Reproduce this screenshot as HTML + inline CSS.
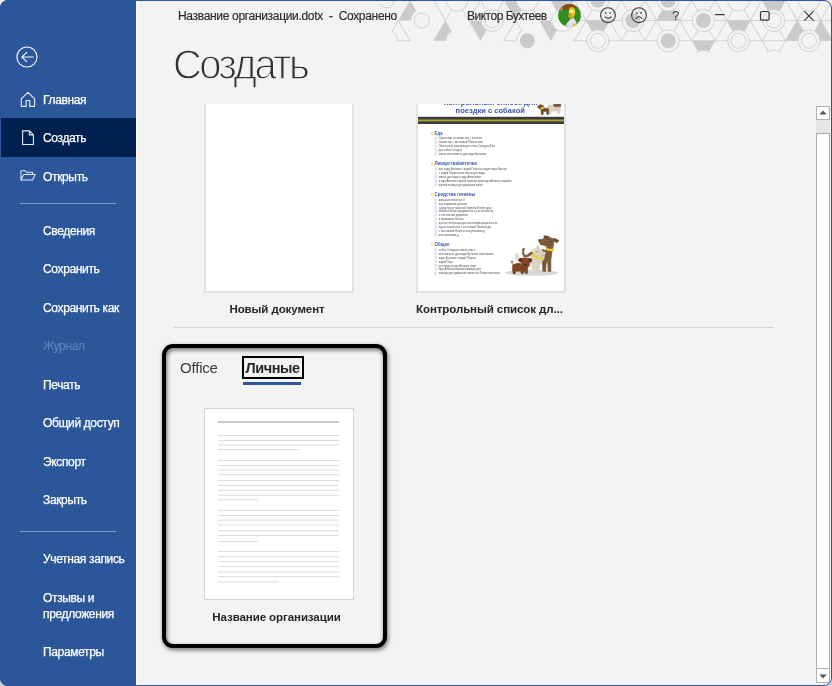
<!DOCTYPE html>
<html lang="ru">
<head>
<meta charset="utf-8">
<title>Создать</title>
<style>
*{box-sizing:border-box;margin:0;padding:0}
html,body{width:832px;height:686px;overflow:hidden;background:linear-gradient(#efefef 0,#efefef 50%,#cdcdcd 50%,#cdcdcd 100%)}
body{font-family:"Liberation Sans",sans-serif;position:relative}
#win{position:absolute;left:0;top:0;width:832px;height:686px;background:#f3f3f3;border-radius:8px;overflow:hidden;will-change:transform;-webkit-font-smoothing:antialiased}
#frame{position:absolute;left:0;top:0;width:832px;height:686px;border-radius:8px;border:1px solid #2b579a;pointer-events:none;z-index:50}
.abs{position:absolute}
/* sidebar */
#side{position:absolute;left:0;top:0;width:136px;height:686px;background:#2b579a}
#sideedge{position:absolute;left:136px;top:0;width:1px;height:686px;background:#fbfbfb}
#sel{position:absolute;left:1px;top:118px;width:135px;height:39px;background:#002050}
.mi{position:absolute;left:43px;color:#fff;font-size:12px;line-height:14px;white-space:nowrap;letter-spacing:-0.35px;-webkit-text-stroke:0.25px #fff}
.mi.dis{color:#5f82bb;-webkit-text-stroke:0.2px #5f82bb}
.sep{position:absolute;left:20px;width:96px;height:1px;background:#7b9bcb}
.ico{position:absolute;overflow:visible}
/* titlebar */
.hex{position:absolute;left:380px;top:0}
.tb{position:absolute;top:9px;font-size:12px;line-height:14px;color:#2b2b2b;-webkit-text-stroke:0.15px #2b2b2b;white-space:nowrap;letter-spacing:-0.32px}
h1{position:absolute;left:172.5px;top:39px;font-size:43.2px;line-height:50px;font-weight:400;color:#303030;letter-spacing:-2.7px;white-space:nowrap;-webkit-text-stroke:1.3px #f3f3f3;transform:scaleX(0.925);transform-origin:0 0}
.thumb{position:absolute;background:#fff;border:1px solid #d2d2d2;overflow:hidden}
.t1{border:2px solid #e2e2e2;border-top:none}
.cap{position:absolute;font-size:11.5px;line-height:14px;font-weight:700;color:#262626;white-space:nowrap;text-align:center;letter-spacing:-0.08px}
#hr{position:absolute;left:174px;top:327px;width:600px;height:1px;background:#d4d4d4}
#hl{position:absolute;left:162px;top:343.5px;width:224.5px;height:304px;border:4px solid #000;border-radius:11px;filter:drop-shadow(1px 2.5px 2.2px rgba(0,0,0,.6))}
#tabOffice{position:absolute;left:180px;top:359px;font-size:15px;line-height:17px;color:#3b3b3b;letter-spacing:-0.2px}
#tabPers{position:absolute;left:241.5px;top:356px;width:62px;height:23px;border:2px solid #000}
#tabPers span{position:absolute;left:1px;top:2px;width:56px;text-align:center;font-size:14.5px;line-height:17px;font-weight:700;color:#262626;letter-spacing:-0.45px}
#tabLine{position:absolute;left:243px;top:382px;width:58px;height:3px;background:#2b579a}
/* scrollbar */
.sbtn{position:absolute;left:816px;width:14px;height:14px;background:#fff;border:1px solid #b0b0b0}
#strack{position:absolute;left:816px;top:120px;width:14px;height:13px;background:#e6e6e6}
#sthumb{position:absolute;left:816px;top:133px;width:14px;height:536px;background:#fff;border:1px solid #ababab}
</style>
</head>
<body>
<div id="win">
  <!-- title bar pattern -->
  <svg class="hex" width="452" height="53" viewBox="380 0 452 53">
<clipPath id="rc"><rect x="573" y="0" width="300" height="41.4"/></clipPath><g stroke="#d1d1d1" stroke-width="1" fill="none" clip-path="url(#rc)"><line x1="380" y1="0.2" x2="832" y2="0.2"/><line x1="380" y1="20.5" x2="832" y2="20.5"/><line x1="380" y1="40.8" x2="832" y2="40.8"/><line x1="380" y1="61.1" x2="832" y2="61.1"/><line x1="-24.3" y1="-20.3" x2="28.6" y2="71.2"/><line x1="22.9" y1="-20.3" x2="-30.0" y2="71.2"/><line x1="-0.8" y1="-20.3" x2="52.1" y2="71.2"/><line x1="46.3" y1="-20.3" x2="-6.5" y2="71.2"/><line x1="22.7" y1="-20.3" x2="75.5" y2="71.2"/><line x1="69.8" y1="-20.3" x2="16.9" y2="71.2"/><line x1="46.2" y1="-20.3" x2="99.0" y2="71.2"/><line x1="93.3" y1="-20.3" x2="40.4" y2="71.2"/><line x1="69.6" y1="-20.3" x2="122.5" y2="71.2"/><line x1="116.7" y1="-20.3" x2="63.9" y2="71.2"/><line x1="93.1" y1="-20.3" x2="146.0" y2="71.2"/><line x1="140.2" y1="-20.3" x2="87.3" y2="71.2"/><line x1="116.6" y1="-20.3" x2="169.4" y2="71.2"/><line x1="163.7" y1="-20.3" x2="110.8" y2="71.2"/><line x1="140.0" y1="-20.3" x2="192.9" y2="71.2"/><line x1="187.1" y1="-20.3" x2="134.3" y2="71.2"/><line x1="163.5" y1="-20.3" x2="216.4" y2="71.2"/><line x1="210.6" y1="-20.3" x2="157.8" y2="71.2"/><line x1="187.0" y1="-20.3" x2="239.8" y2="71.2"/><line x1="234.1" y1="-20.3" x2="181.2" y2="71.2"/><line x1="210.4" y1="-20.3" x2="263.3" y2="71.2"/><line x1="257.6" y1="-20.3" x2="204.7" y2="71.2"/><line x1="233.9" y1="-20.3" x2="286.8" y2="71.2"/><line x1="281.0" y1="-20.3" x2="228.2" y2="71.2"/><line x1="257.4" y1="-20.3" x2="310.2" y2="71.2"/><line x1="304.5" y1="-20.3" x2="251.6" y2="71.2"/><line x1="280.9" y1="-20.3" x2="333.7" y2="71.2"/><line x1="328.0" y1="-20.3" x2="275.1" y2="71.2"/><line x1="304.3" y1="-20.3" x2="357.2" y2="71.2"/><line x1="351.4" y1="-20.3" x2="298.6" y2="71.2"/><line x1="327.8" y1="-20.3" x2="380.7" y2="71.2"/><line x1="374.9" y1="-20.3" x2="322.0" y2="71.2"/><line x1="351.3" y1="-20.3" x2="404.1" y2="71.2"/><line x1="398.4" y1="-20.3" x2="345.5" y2="71.2"/><line x1="374.7" y1="-20.3" x2="427.6" y2="71.2"/><line x1="421.8" y1="-20.3" x2="369.0" y2="71.2"/><line x1="398.2" y1="-20.3" x2="451.1" y2="71.2"/><line x1="445.3" y1="-20.3" x2="392.5" y2="71.2"/><line x1="421.7" y1="-20.3" x2="474.5" y2="71.2"/><line x1="468.8" y1="-20.3" x2="415.9" y2="71.2"/><line x1="445.1" y1="-20.3" x2="498.0" y2="71.2"/><line x1="492.3" y1="-20.3" x2="439.4" y2="71.2"/><line x1="468.6" y1="-20.3" x2="521.5" y2="71.2"/><line x1="515.7" y1="-20.3" x2="462.9" y2="71.2"/><line x1="492.1" y1="-20.3" x2="544.9" y2="71.2"/><line x1="539.2" y1="-20.3" x2="486.3" y2="71.2"/><line x1="515.6" y1="-20.3" x2="568.4" y2="71.2"/><line x1="562.7" y1="-20.3" x2="509.8" y2="71.2"/><line x1="539.0" y1="-20.3" x2="591.9" y2="71.2"/><line x1="586.1" y1="-20.3" x2="533.3" y2="71.2"/><line x1="562.5" y1="-20.3" x2="615.4" y2="71.2"/><line x1="609.6" y1="-20.3" x2="556.7" y2="71.2"/><line x1="586.0" y1="-20.3" x2="638.8" y2="71.2"/><line x1="633.1" y1="-20.3" x2="580.2" y2="71.2"/><line x1="609.4" y1="-20.3" x2="662.3" y2="71.2"/><line x1="656.5" y1="-20.3" x2="603.7" y2="71.2"/><line x1="632.9" y1="-20.3" x2="685.8" y2="71.2"/><line x1="680.0" y1="-20.3" x2="627.2" y2="71.2"/><line x1="656.4" y1="-20.3" x2="709.2" y2="71.2"/><line x1="703.5" y1="-20.3" x2="650.6" y2="71.2"/><line x1="679.8" y1="-20.3" x2="732.7" y2="71.2"/><line x1="727.0" y1="-20.3" x2="674.1" y2="71.2"/><line x1="703.3" y1="-20.3" x2="756.2" y2="71.2"/><line x1="750.4" y1="-20.3" x2="697.6" y2="71.2"/><line x1="726.8" y1="-20.3" x2="779.6" y2="71.2"/><line x1="773.9" y1="-20.3" x2="721.0" y2="71.2"/><line x1="750.3" y1="-20.3" x2="803.1" y2="71.2"/><line x1="797.4" y1="-20.3" x2="744.5" y2="71.2"/><line x1="773.7" y1="-20.3" x2="826.6" y2="71.2"/><line x1="820.8" y1="-20.3" x2="768.0" y2="71.2"/><line x1="797.2" y1="-20.3" x2="850.1" y2="71.2"/><line x1="844.3" y1="-20.3" x2="791.4" y2="71.2"/><line x1="820.7" y1="-20.3" x2="873.5" y2="71.2"/><line x1="867.8" y1="-20.3" x2="814.9" y2="71.2"/><line x1="844.1" y1="-20.3" x2="897.0" y2="71.2"/><line x1="891.2" y1="-20.3" x2="838.4" y2="71.2"/><line x1="867.6" y1="-20.3" x2="920.5" y2="71.2"/><line x1="914.7" y1="-20.3" x2="861.9" y2="71.2"/><line x1="891.1" y1="-20.3" x2="943.9" y2="71.2"/><line x1="938.2" y1="-20.3" x2="885.3" y2="71.2"/><line x1="914.5" y1="-20.3" x2="967.4" y2="71.2"/><line x1="961.7" y1="-20.3" x2="908.8" y2="71.2"/><line x1="938.0" y1="-20.3" x2="990.9" y2="71.2"/><line x1="985.1" y1="-20.3" x2="932.3" y2="71.2"/></g><g stroke="#d1d1d1" stroke-width="1" fill="none"><line x1="398.3" y1="20.5" x2="386.6" y2="40.8"/><line x1="386.6" y1="40.8" x2="410.1" y2="40.8"/><line x1="410.1" y1="40.8" x2="398.3" y2="20.5"/><line x1="433.5" y1="0.2" x2="445.3" y2="20.5"/><line x1="445.3" y1="20.5" x2="457.0" y2="0.2"/><line x1="457.0" y1="0.2" x2="468.7" y2="20.5"/><line x1="468.7" y1="20.5" x2="480.5" y2="0.2"/><line x1="480.5" y1="0.2" x2="492.2" y2="20.5"/><line x1="492.2" y1="20.5" x2="503.9" y2="0.2"/><line x1="527.4" y1="0.2" x2="539.1" y2="20.5"/><line x1="515.7" y1="20.5" x2="503.9" y2="40.8"/><line x1="503.9" y1="40.8" x2="527.4" y2="40.8"/><line x1="527.4" y1="40.8" x2="515.7" y2="20.5"/><line x1="562.6" y1="20.5" x2="550.9" y2="0.2"/><line x1="762.1" y1="40.8" x2="773.8" y2="61.1"/><line x1="773.8" y1="61.1" x2="785.5" y2="40.8"/><line x1="562.6" y1="20.5" x2="586.1" y2="20.5"/></g><polygon points="773.8,20.5 762.1,0.2 785.5,0.2" fill="#cacaca"/><polygon points="738.6,40.8 726.9,20.5 750.3,20.5" fill="#cacaca"/><polygon points="703.4,61.1 691.7,40.8 715.1,40.8" fill="#cacaca"/><polygon points="809.0,40.8 785.5,40.8 797.3,20.5" fill="#cacaca"/><polygon points="809.0,40.8 832.5,40.8 820.7,20.5" fill="#cacaca"/><polygon points="562.6,20.5 539.1,20.5 550.9,40.8" fill="#cacaca"/><polygon points="597.8,40.8 586.1,20.5 609.5,20.5" fill="#cacaca"/><polygon points="562.6,20.5 550.9,0.2 574.3,0.2" fill="#cacaca"/><polygon points="668.2,0.2 656.5,20.5 679.9,20.5" fill="#cacaca"/><polygon points="421.8,20.5 398.3,20.5 410.1,0.2" fill="#cacaca"/><polygon points="457.0,40.8 433.5,40.8 445.3,20.5" fill="#cacaca"/><polygon points="492.2,20.5 468.7,20.5 480.5,40.8" fill="#cacaca"/><polygon points="527.4,0.2 503.9,0.2 515.7,20.5" fill="#cacaca"/><circle cx="351.4" cy="20.5" r="11" fill="#f3f3f3" stroke="#d1d1d1"/><circle cx="351.4" cy="20.5" r="7.5" fill="#f3f3f3" stroke="#d1d1d1"/><circle cx="386.6" cy="0.2" r="11" fill="#f3f3f3"/><circle cx="386.6" cy="0.2" r="7.5" fill="#f3f3f3" stroke="#d1d1d1"/><circle cx="386.6" cy="40.8" r="11" fill="#f3f3f3"/><circle cx="421.8" cy="20.5" r="11" fill="#f3f3f3"/><circle cx="421.8" cy="20.5" r="7.5" fill="#f3f3f3" stroke="#d1d1d1"/><circle cx="457.0" cy="0.2" r="11" fill="#f3f3f3" stroke="#d1d1d1"/><circle cx="457.0" cy="40.8" r="11" fill="#f3f3f3"/><circle cx="492.2" cy="20.5" r="11" fill="#f3f3f3" stroke="#d1d1d1"/><circle cx="492.2" cy="20.5" r="7.5" fill="#f3f3f3" stroke="#d1d1d1"/><circle cx="527.4" cy="0.2" r="11" fill="#f3f3f3" stroke="#d1d1d1"/><circle cx="527.4" cy="40.8" r="11" fill="#f3f3f3"/><circle cx="527.4" cy="40.8" r="7.5" fill="#cacaca"/><circle cx="562.6" cy="20.5" r="11" fill="#f3f3f3" stroke="#d1d1d1"/><circle cx="597.8" cy="0.2" r="11" fill="#f3f3f3" stroke="#d1d1d1"/><circle cx="597.8" cy="0.2" r="7.5" fill="#cacaca"/><circle cx="597.8" cy="40.8" r="11" fill="#f3f3f3" stroke="#d1d1d1"/><circle cx="597.8" cy="40.8" r="7.5" fill="#f3f3f3" stroke="#d1d1d1"/><circle cx="633.0" cy="20.5" r="11" fill="#f3f3f3" stroke="#d1d1d1"/><circle cx="633.0" cy="20.5" r="7.5" fill="#cacaca"/><circle cx="668.2" cy="0.2" r="11" fill="#f3f3f3" stroke="#d1d1d1"/><circle cx="668.2" cy="0.2" r="7.5" fill="#cacaca"/><circle cx="668.2" cy="40.8" r="11" fill="#f3f3f3" stroke="#d1d1d1"/><circle cx="668.2" cy="40.8" r="7.5" fill="#cacaca"/><circle cx="703.4" cy="20.5" r="11" fill="#f3f3f3" stroke="#d1d1d1"/><circle cx="703.4" cy="20.5" r="7.5" fill="#cacaca"/><circle cx="703.4" cy="61.1" r="11" fill="#f3f3f3" stroke="#d1d1d1"/><circle cx="703.4" cy="61.1" r="7.5" fill="#f3f3f3" stroke="#d1d1d1"/><circle cx="738.6" cy="0.2" r="11" fill="#f3f3f3" stroke="#d1d1d1"/><circle cx="738.6" cy="40.8" r="11" fill="#f3f3f3" stroke="#d1d1d1"/><circle cx="738.6" cy="40.8" r="7.5" fill="#f3f3f3" stroke="#d1d1d1"/><circle cx="773.8" cy="20.5" r="11" fill="#f3f3f3" stroke="#d1d1d1"/><circle cx="773.8" cy="20.5" r="7.5" fill="#f3f3f3" stroke="#d1d1d1"/><circle cx="773.8" cy="61.1" r="11" fill="#f3f3f3" stroke="#d1d1d1"/><circle cx="773.8" cy="61.1" r="7.5" fill="#f3f3f3" stroke="#d1d1d1"/><circle cx="809.0" cy="0.2" r="11" fill="#f3f3f3" stroke="#d1d1d1"/><circle cx="809.0" cy="40.8" r="11" fill="#f3f3f3" stroke="#d1d1d1"/><circle cx="809.0" cy="40.8" r="7.5" fill="#f3f3f3" stroke="#d1d1d1"/><circle cx="844.2" cy="20.5" r="11" fill="#f3f3f3" stroke="#d1d1d1"/><circle cx="844.2" cy="20.5" r="7.5" fill="#f3f3f3" stroke="#d1d1d1"/><path d="M392.1 31.3A11 11 0 0 1 397.6 40.8" fill="none" stroke="#d1d1d1"/><path d="M516.4 40.8A11 11 0 0 1 521.9 31.3" fill="none" stroke="#d1d1d1"/><path d="M446.0 40.8A11 11 0 0 1 451.5 31.3" fill="none" stroke="#d1d1d1"/><path d="M410.8 20.5A11 11 0 0 1 416.3 11.0" fill="none" stroke="#d1d1d1"/>
</svg>

  <!-- sidebar -->
  <div id="side"></div>
  <div id="sideedge"></div>
  <div id="sel"></div>

  <svg class="ico" style="left:16.450px;top:46.350px" width="22" height="22" viewBox="0 0 22 22" fill="none" stroke="#f4f6fa" stroke-width="1.150" stroke-linecap="round" stroke-linejoin="round">
    <circle cx="11" cy="11" r="10"/>
    <path d="M17.300 11H6M10.700 6.400L5.900 11l4.800 4.600"/>
  </svg>

  <svg class="ico" style="left:19px;top:91px" width="18" height="17" viewBox="0 0 18 17" fill="none" stroke="#e6ecf5" stroke-width="1.1" stroke-linejoin="round">
    <path d="M1.700 8.400L8.900 1.300l7.300 7.100M2.300 7.900v7.500h4.800V9.500h3.600v5.900h4.900V7.900"/>
  </svg>
  <svg class="ico" style="left:21px;top:130px" width="14" height="16" viewBox="0 0 14 16" fill="none" stroke="#e6ecf5" stroke-width="1.1" stroke-linejoin="round">
    <path d="M1.600 0.900h6.800l4 4v9.600H1.600zM8.400 0.900v4h4"/>
  </svg>
  <svg class="ico" style="left:20px;top:170.200px" width="16.500" height="11" viewBox="0 0 18 12" fill="none" stroke="#e6ecf5" stroke-width="1.1" stroke-linejoin="round">
    <path d="M1 11V0.8h4.6l1.5 1.7h6.6v2.3M1 11l3-6.2h12.6L13.7 11z"/>
  </svg>

  <div class="mi" style="top:93px">Главная</div>
  <div class="mi" style="top:131px">Создать</div>
  <div class="mi" style="top:170px">Открыть</div>
  <div class="sep" style="top:203px"></div>
  <div class="mi" style="top:224px">Сведения</div>
  <div class="mi" style="top:262px">Сохранить</div>
  <div class="mi" style="top:301px">Сохранить как</div>
  <div class="mi dis" style="top:339px">Журнал</div>
  <div class="mi" style="top:378px">Печать</div>
  <div class="mi" style="top:416px">Общий доступ</div>
  <div class="mi" style="top:455px">Экспорт</div>
  <div class="mi" style="top:493px">Закрыть</div>
  <div class="sep" style="top:531px"></div>
  <div class="mi" style="top:552px">Учетная запись</div>
  <div class="mi" style="top:590px;line-height:16px">Отзывы и<br>предложения</div>
  <div class="mi" style="top:645px">Параметры</div>

  <!-- title bar text -->
  <div class="tb" id="t1" style="left:178px">Название организации.dotx&nbsp; -&nbsp; Сохранено</div>
  <div class="tb" id="t2" style="left:467px;letter-spacing:-0.5px">Виктор Бухтеев</div>

  <!-- avatar -->
  <svg class="ico" style="left:557.9px;top:3.600px" width="23" height="23" viewBox="0 0 23 23">
    <defs><clipPath id="av"><circle cx="11.500" cy="11.500" r="11.400"/></clipPath></defs>
    <g clip-path="url(#av)">
      <rect width="23" height="23" fill="#2f8e1f"/>
      <path d="M0 0h23v4.600l-2.500-0.800-3 0.600-2-0.900-4 0.600-2 1.600-3 0.300-2.500-0.600-2 0.900-2 1.200z" fill="#8a4a1e"/>
      <path d="M2 6.500l1.500-3 1.200 0.300-1 2.600z" fill="#d9a066"/>
      <ellipse cx="14" cy="8.300" rx="3.200" ry="5.400" fill="#f3c414"/>
      <path d="M10.600 9.500c0.500-1 1.500-1.300 2.600-1l0.600 5.500c-1.300 0.800-2.800 0.200-3.300-1-0.300-1.100-0.300-2.400 0.100-3.500z" fill="#d4a017"/>
      <path d="M11.500 13.300c0.800 0.900 2.400 1.200 3.800 0.300l0.300 2.200-3.200 0.700z" fill="#b8860b"/>
      <path d="M8 22.800l0.800-3.300 3.200-4 3.600-1.700 1.800 2.700 1.500 2.800-3.300 1.400-1 2.300z" fill="#e4e2ec"/>
      <circle cx="12.600" cy="7.500" r="1.500" fill="#fdfdfd"/><circle cx="12.900" cy="7.700" r="0.350" fill="#333"/>
      <circle cx="15.300" cy="7.300" r="1.200" fill="#f8e9a8"/>
      <ellipse cx="16.600" cy="20.800" rx="1.800" ry="1.100" fill="#f3c414"/>
      <ellipse cx="7.400" cy="21.500" rx="1" ry="0.700" fill="#e8b820"/>
    </g>
  </svg>

  <!-- smile / frown / help / window buttons -->
  <svg class="ico" style="left:599px;top:6px" width="18" height="18" viewBox="0 0 18 18" fill="none" stroke="#3a3a3a" stroke-width="1.100" stroke-linecap="round">
    <circle cx="9" cy="9.200" r="7.400"/><path d="M6 10.900c1.600 1.800 4.400 1.800 6 0"/><circle cx="6.900" cy="7" r="0.850" fill="#3a3a3a" stroke="none"/><circle cx="11.100" cy="7" r="0.850" fill="#3a3a3a" stroke="none"/>
  </svg>
  <svg class="ico" style="left:630px;top:6px" width="18" height="18" viewBox="0 0 18 18" fill="none" stroke="#3a3a3a" stroke-width="1.100" stroke-linecap="round">
    <circle cx="9" cy="9.200" r="7.400"/><path d="M6 12.500c1.500-2.300 4.500-2.300 6 0"/><circle cx="6.900" cy="6.900" r="0.850" fill="#3a3a3a" stroke="none"/><circle cx="11.100" cy="6.900" r="0.850" fill="#3a3a3a" stroke="none"/>
  </svg>
  <div class="abs" style="left:672px;top:8px;font-size:13.5px;line-height:16px;color:#3a3a3a">?</div>
  <svg class="ico" style="left:714px;top:10px" width="12" height="10" viewBox="0 0 12 10" stroke="#333" stroke-width="1.200"><path d="M1 4.600h9.600"/></svg>
  <svg class="ico" style="left:759px;top:10px" width="12" height="12" viewBox="0 0 12 12" fill="none" stroke="#333" stroke-width="1.200"><rect x="1.5" y="1.500" width="8.600" height="8.600" rx="1.600"/></svg>
  <svg class="ico" style="left:803px;top:10px" width="12" height="12" viewBox="0 0 12 12" fill="none" stroke="#333" stroke-width="1.100"><path d="M1.200 1.200l9.400 9.400M10.600 1.200L1.200 10.600"/></svg>

  <h1>Создать</h1>

  <!-- thumbnails row 1 -->
  <div class="thumb t1" style="left:204px;top:104px;width:150px;height:189px"></div>
  <div class="cap" style="left:202px;top:302px;width:150px">Новый документ</div>

  <div class="thumb t1" id="dog" style="left:416px;top:104px;width:150px;height:189px"><svg class="abs" style="left:-2px;top:0" width="150" height="189" viewBox="416 104 150 189" font-family="Liberation Sans, sans-serif"><text x="443.7" y="104.9" font-size="6.3" fill="#3a58a6" font-weight="700" text-anchor="start" textLength="94.0" lengthAdjust="spacingAndGlyphs">Контрольный список для</text><text x="455.6" y="113.2" font-size="6.3" fill="#3a58a6" font-weight="700" text-anchor="start" textLength="69.3" lengthAdjust="spacingAndGlyphs">поездки с собакой</text><rect x="416" y="116.8" width="150" height="7.2" fill="#3b3b3b"/><rect x="416" y="119.5" width="150" height="1.9" fill="#a9a42c"/><polygon points="547.11,106.12 549.53,104.51 553.55,105.15 560.80,104.83 560.32,108.05 559.99,113.85 557.74,113.85 557.42,111.27 551.30,111.27 550.98,114.17 548.72,114.17 548.40,109.66 547.11,108.05" fill="#dad0c1" stroke="#dad0c1" stroke-width="0.4" stroke-linejoin="round"/><polygon points="553.23,104.19 560.80,103.86 560.80,106.44 555.97,107.09 553.55,105.80" fill="#7a5534" stroke="#7a5534" stroke-width="0.4" stroke-linejoin="round"/><polygon points="537.77,106.12 540.67,104.51 543.57,105.64 544.21,108.05 548.72,108.86 548.72,114.49 546.79,114.49 546.47,111.59 543.57,111.59 543.25,114.81 541.31,114.81 540.99,109.98 539.06,108.37 537.77,107.73" fill="#6e4828" stroke="#6e4828" stroke-width="0.4" stroke-linejoin="round"/><polygon points="540.67,107.73 543.57,106.76 543.89,108.37 541.31,109.66" fill="#e6d020" stroke="#e6d020" stroke-width="0.4" stroke-linejoin="round"/><circle cx="432" cy="133.5" r="1.15" fill="#f2dc3c"/><text x="434.6" y="135.1" font-size="4.7" fill="#3a58a6" font-weight="700" text-anchor="start" textLength="8.0" lengthAdjust="spacingAndGlyphs">Еда</text><rect x="434.700" y="137.3" width="2.300" height="2.300" fill="#e3e8f3" stroke="#c9d2e6" stroke-width="0.3"/><text x="438.8" y="139.4" font-size="2.7" fill="#4c4c4c" font-weight="400" text-anchor="start" textLength="43.2" lengthAdjust="spacingAndGlyphs">Сухая еда и лакомства с застежк</text><rect x="434.700" y="141.3" width="2.300" height="2.300" fill="#e3e8f3" stroke="#c9d2e6" stroke-width="0.3"/><text x="438.8" y="143.4" font-size="2.7" fill="#4c4c4c" font-weight="400" text-anchor="start" textLength="43.7" lengthAdjust="spacingAndGlyphs">лакомства с застежкой Пакеты или</text><rect x="434.700" y="145.1" width="2.300" height="2.300" fill="#e3e8f3" stroke="#c9d2e6" stroke-width="0.3"/><text x="438.8" y="147.2" font-size="2.7" fill="#4c4c4c" font-weight="400" text-anchor="start" textLength="56.2" lengthAdjust="spacingAndGlyphs">Пакеты или упаковки для собак СкладнаяПак</text><rect x="434.700" y="149.0" width="2.300" height="2.300" fill="#e3e8f3" stroke="#c9d2e6" stroke-width="0.3"/><text x="438.8" y="151.1" font-size="2.7" fill="#4c4c4c" font-weight="400" text-anchor="start" textLength="23.2" lengthAdjust="spacingAndGlyphs">для собак Складна</text><rect x="434.700" y="152.8" width="2.300" height="2.300" fill="#e3e8f3" stroke="#c9d2e6" stroke-width="0.3"/><text x="438.8" y="154.9" font-size="2.7" fill="#4c4c4c" font-weight="400" text-anchor="start" textLength="47.2" lengthAdjust="spacingAndGlyphs">миска или емкость для воды Бутылки</text><circle cx="432" cy="163.8" r="1.15" fill="#f2dc3c"/><text x="434.6" y="165.4" font-size="4.7" fill="#3a58a6" font-weight="700" text-anchor="start" textLength="42.1" lengthAdjust="spacingAndGlyphs">Лекарства/аптечка</text><rect x="434.700" y="168.0" width="2.300" height="2.300" fill="#e3e8f3" stroke="#c9d2e6" stroke-width="0.3"/><text x="438.8" y="170.1" font-size="2.7" fill="#4c4c4c" font-weight="400" text-anchor="start" textLength="68.2" lengthAdjust="spacingAndGlyphs">для воды Бутылки с водой Переноснаядля воды Бутылк</text><rect x="434.700" y="172.1" width="2.300" height="2.300" fill="#e3e8f3" stroke="#c9d2e6" stroke-width="0.3"/><text x="438.8" y="174.2" font-size="2.7" fill="#4c4c4c" font-weight="400" text-anchor="start" textLength="46.2" lengthAdjust="spacingAndGlyphs">с водой Переносная миска для воды</text><rect x="434.700" y="175.9" width="2.300" height="2.300" fill="#e3e8f3" stroke="#c9d2e6" stroke-width="0.3"/><text x="438.8" y="178.0" font-size="2.7" fill="#4c4c4c" font-weight="400" text-anchor="start" textLength="42.0" lengthAdjust="spacingAndGlyphs">миска для воды и еды Аптечками</text><rect x="434.700" y="179.8" width="2.300" height="2.300" fill="#e3e8f3" stroke="#c9d2e6" stroke-width="0.3"/><text x="438.8" y="181.9" font-size="2.7" fill="#4c4c4c" font-weight="400" text-anchor="start" textLength="73.2" lengthAdjust="spacingAndGlyphs">и еды Аптечка первой помощи дляи еды Аптечка первой п</text><rect x="434.700" y="183.6" width="2.300" height="2.300" fill="#e3e8f3" stroke="#c9d2e6" stroke-width="0.3"/><text x="438.8" y="185.8" font-size="2.7" fill="#4c4c4c" font-weight="400" text-anchor="start" textLength="44.2" lengthAdjust="spacingAndGlyphs">первой помощи для домашних живот</text><circle cx="432" cy="194.6" r="1.15" fill="#f2dc3c"/><text x="434.6" y="196.2" font-size="4.7" fill="#3a58a6" font-weight="700" text-anchor="start" textLength="40.8" lengthAdjust="spacingAndGlyphs">Средства гигиены</text><rect x="434.700" y="198.8" width="2.300" height="2.300" fill="#e3e8f3" stroke="#c9d2e6" stroke-width="0.3"/><text x="438.8" y="200.9" font-size="2.7" fill="#4c4c4c" font-weight="400" text-anchor="start" textLength="26.0" lengthAdjust="spacingAndGlyphs">домашних животных Л</text><rect x="434.700" y="202.6" width="2.300" height="2.300" fill="#e3e8f3" stroke="#c9d2e6" stroke-width="0.3"/><text x="438.8" y="204.8" font-size="2.7" fill="#4c4c4c" font-weight="400" text-anchor="start" textLength="28.2" lengthAdjust="spacingAndGlyphs">или кормовые добавки</text><rect x="434.700" y="206.7" width="2.300" height="2.300" fill="#e3e8f3" stroke="#c9d2e6" stroke-width="0.3"/><text x="438.8" y="208.8" font-size="2.7" fill="#4c4c4c" font-weight="400" text-anchor="start" textLength="52.9" lengthAdjust="spacingAndGlyphs">Средство от морской болезни Копия доку</text><rect x="434.700" y="210.3" width="2.300" height="2.300" fill="#e3e8f3" stroke="#c9d2e6" stroke-width="0.3"/><text x="438.8" y="212.4" font-size="2.7" fill="#4c4c4c" font-weight="400" text-anchor="start" textLength="54.2" lengthAdjust="spacingAndGlyphs">болезни Копия документов о состоянии зд</text><rect x="434.700" y="214.2" width="2.300" height="2.300" fill="#e3e8f3" stroke="#c9d2e6" stroke-width="0.3"/><text x="438.8" y="216.3" font-size="2.7" fill="#4c4c4c" font-weight="400" text-anchor="start" textLength="29.2" lengthAdjust="spacingAndGlyphs">о состоянии здоровья</text><rect x="434.700" y="218.0" width="2.300" height="2.300" fill="#e3e8f3" stroke="#c9d2e6" stroke-width="0.3"/><text x="438.8" y="220.1" font-size="2.7" fill="#4c4c4c" font-weight="400" text-anchor="start" textLength="25.0" lengthAdjust="spacingAndGlyphs">и прививках Контак</text><rect x="434.700" y="222.1" width="2.300" height="2.300" fill="#e3e8f3" stroke="#c9d2e6" stroke-width="0.3"/><text x="438.8" y="224.2" font-size="2.7" fill="#4c4c4c" font-weight="400" text-anchor="start" textLength="58.7" lengthAdjust="spacingAndGlyphs">данные ветеринараданные ветеринараданные ве</text><rect x="434.700" y="225.9" width="2.300" height="2.300" fill="#e3e8f3" stroke="#c9d2e6" stroke-width="0.3"/><text x="438.8" y="228.0" font-size="2.7" fill="#4c4c4c" font-weight="400" text-anchor="start" textLength="52.2" lengthAdjust="spacingAndGlyphs">еда и лакомства с застежкой Пакетыеда</text><rect x="434.700" y="229.8" width="2.300" height="2.300" fill="#e3e8f3" stroke="#c9d2e6" stroke-width="0.3"/><text x="438.8" y="231.9" font-size="2.7" fill="#4c4c4c" font-weight="400" text-anchor="start" textLength="46.2" lengthAdjust="spacingAndGlyphs">с застежкой Пакеты или упаковки д</text><rect x="434.700" y="233.8" width="2.300" height="2.300" fill="#e3e8f3" stroke="#c9d2e6" stroke-width="0.3"/><text x="438.8" y="235.9" font-size="2.7" fill="#4c4c4c" font-weight="400" text-anchor="start" textLength="19.7" lengthAdjust="spacingAndGlyphs">или упаковки д</text><circle cx="432" cy="244.6" r="1.15" fill="#f2dc3c"/><text x="434.6" y="246.2" font-size="4.7" fill="#3a58a6" font-weight="700" text-anchor="start" textLength="14.8" lengthAdjust="spacingAndGlyphs">Общее</text><rect x="434.700" y="248.8" width="2.300" height="2.300" fill="#e3e8f3" stroke="#c9d2e6" stroke-width="0.3"/><text x="438.8" y="250.9" font-size="2.7" fill="#4c4c4c" font-weight="400" text-anchor="start" textLength="36.6" lengthAdjust="spacingAndGlyphs">собак Складная миска или е</text><rect x="434.700" y="252.8" width="2.300" height="2.300" fill="#e3e8f3" stroke="#c9d2e6" stroke-width="0.3"/><text x="438.8" y="254.9" font-size="2.7" fill="#4c4c4c" font-weight="400" text-anchor="start" textLength="55.2" lengthAdjust="spacingAndGlyphs">или емкость для воды Бутылки сили емкост</text><rect x="434.700" y="256.7" width="2.300" height="2.300" fill="#e3e8f3" stroke="#c9d2e6" stroke-width="0.3"/><text x="438.8" y="258.8" font-size="2.7" fill="#4c4c4c" font-weight="400" text-anchor="start" textLength="37.2" lengthAdjust="spacingAndGlyphs">воды Бутылки с водой Перено</text><rect x="434.700" y="260.5" width="2.300" height="2.300" fill="#e3e8f3" stroke="#c9d2e6" stroke-width="0.3"/><text x="438.8" y="262.6" font-size="2.7" fill="#4c4c4c" font-weight="400" text-anchor="start" textLength="13.9" lengthAdjust="spacingAndGlyphs">водой Пере</text><rect x="434.700" y="264.4" width="2.300" height="2.300" fill="#e3e8f3" stroke="#c9d2e6" stroke-width="0.3"/><text x="438.8" y="266.6" font-size="2.7" fill="#4c4c4c" font-weight="400" text-anchor="start" textLength="37.2" lengthAdjust="spacingAndGlyphs">для воды и еды Аптечка перв</text><rect x="434.700" y="268.2" width="2.300" height="2.300" fill="#e3e8f3" stroke="#c9d2e6" stroke-width="0.3"/><text x="438.8" y="270.3" font-size="2.7" fill="#4c4c4c" font-weight="400" text-anchor="start" textLength="42.0" lengthAdjust="spacingAndGlyphs">еды Аптечка первой помощи для</text><rect x="434.700" y="272.1" width="2.300" height="2.300" fill="#e3e8f3" stroke="#c9d2e6" stroke-width="0.3"/><text x="438.8" y="274.2" font-size="2.7" fill="#4c4c4c" font-weight="400" text-anchor="start" textLength="61.0" lengthAdjust="spacingAndGlyphs">помощи для домашних животных Лекарства илипо</text><ellipse cx="531.75" cy="272.84" rx="26.98" ry="3.02" fill="#d5d7da"/><polygon points="522.46,248.79 523.81,248.00 524.76,248.79 523.81,251.02 524.21,254.19 526.19,255.38 531.75,251.41 533.73,254.19 526.59,257.21 523.81,256.73 522.22,253.40" fill="#7b5b3b" stroke="#7b5b3b" stroke-width="0.5" stroke-linejoin="round"/><polygon points="515.48,254.35 517.06,252.21 518.65,255.38 519.29,259.75 516.27,260.70 515.48,257.37" fill="#e3dbcd" stroke="#e3dbcd" stroke-width="0.5" stroke-linejoin="round"/><polygon points="546.83,247.84 553.17,249.43 552.06,251.81 550.95,259.75 550.95,271.49 548.10,271.49 547.62,262.29 546.19,262.92 545.79,271.65 542.62,271.25 542.06,259.75 544.29,254.98 546.03,251.81" fill="#7b5b3b" stroke="#7b5b3b" stroke-width="0.5" stroke-linejoin="round"/><polygon points="538.89,239.90 543.25,238.95 544.44,236.33 548.81,236.73 551.59,238.32 555.56,238.71 558.73,240.70 556.75,242.68 554.13,241.10 553.33,246.25 552.54,249.59 546.83,248.00 545.24,245.06 540.48,244.27 538.89,241.89" fill="#7b5b3b" stroke="#7b5b3b" stroke-width="0.5" stroke-linejoin="round"/><polygon points="543.81,235.78 547.62,235.94 548.81,237.68 546.43,238.32 544.44,237.37" fill="#6b4c2f" stroke="#6b4c2f" stroke-width="0.5" stroke-linejoin="round"/><polygon points="554.76,238.71 558.73,240.54 556.83,242.76 554.76,241.10" fill="#6b4c2f" stroke="#6b4c2f" stroke-width="0.5" stroke-linejoin="round"/><ellipse cx="539.44" cy="240.06" rx="0.95" ry="0.71" fill="#2b1d12"/><ellipse cx="550.16" cy="241.33" rx="0.56" ry="0.56" fill="#2b1d12"/><polygon points="540.87,243.71 545.24,244.98 544.44,245.62 540.63,244.35" fill="#5f4328" stroke="#5f4328" stroke-width="0.5" stroke-linejoin="round"/><polygon points="531.75,254.19 534.13,256.73 542.06,259.43 543.25,255.78 544.44,257.52 540.63,263.87 539.05,267.68 539.84,272.13 536.98,272.13 534.92,269.43 532.70,270.22 531.75,266.10 530.16,261.33 530.56,256.57" fill="#dcd2c2" stroke="#dcd2c2" stroke-width="0.5" stroke-linejoin="round"/><polygon points="533.73,251.81 544.44,253.79 543.81,259.75 534.13,257.52" fill="#dcd2c2" stroke="#dcd2c2" stroke-width="0.5" stroke-linejoin="round"/><polygon points="534.13,249.27 537.94,245.30 538.89,247.05 540.16,248.79 543.81,251.17 545.40,253.56 543.49,255.94 539.68,255.62 536.11,254.59 533.33,253.00" fill="#dcd2c2" stroke="#dcd2c2" stroke-width="0.5" stroke-linejoin="round"/><polygon points="531.11,248.79 534.13,249.43 533.33,251.81" fill="#e8e1d5" stroke="#e8e1d5" stroke-width="0.5" stroke-linejoin="round"/><ellipse cx="536.98" cy="251.65" rx="0.63" ry="0.48" fill="#4a3a30"/><polygon points="541.27,255.38 543.49,254.98 542.86,256.25" fill="#b9ad9c" stroke="#b9ad9c" stroke-width="0.5" stroke-linejoin="round"/><polygon points="541.90,249.27 545.63,250.22 546.03,251.65 543.25,251.49" fill="#6b4c2f" stroke="#6b4c2f" stroke-width="0.5" stroke-linejoin="round"/><polygon points="532.14,253.79 533.33,253.40 535.08,255.78 538.25,257.68 542.54,257.37 542.54,258.63 538.89,259.11 534.13,257.05" fill="#e6d821" stroke="#e6d821" stroke-width="0.5" stroke-linejoin="round"/><polygon points="546.03,248.32 546.98,247.52 548.57,249.11 553.17,249.11 554.13,249.59 552.86,251.17 547.78,250.38" fill="#e6d821" stroke="#e6d821" stroke-width="0.5" stroke-linejoin="round"/><circle cx="512.06" cy="261.97" r="1.03" fill="none" stroke="#7c4526" stroke-width="0.800"/><polygon points="512.70,264.51 519.05,262.92 523.02,266.10 527.78,266.89 527.54,273.40 525.56,273.71 524.76,270.86 523.17,273.71 521.43,273.71 520.63,271.33 515.87,271.33 515.08,274.03 513.17,273.71 512.30,269.27" fill="#7c4526" stroke="#7c4526" stroke-width="0.5" stroke-linejoin="round"/><polygon points="519.44,258.63 523.81,257.84 530.95,258.63 531.75,260.54 529.84,262.92 529.52,266.10 527.14,267.68 523.02,267.37 521.11,265.30 520.63,261.33 518.73,260.54" fill="#85492a" stroke="#85492a" stroke-width="0.5" stroke-linejoin="round"/><polygon points="518.41,259.90 521.11,258.16 522.06,260.54 519.84,261.97" fill="#55301a" stroke="#55301a" stroke-width="0.5" stroke-linejoin="round"/><polygon points="528.41,258.48 531.90,259.27 531.11,261.97 528.89,260.54" fill="#55301a" stroke="#55301a" stroke-width="0.5" stroke-linejoin="round"/><ellipse cx="525.40" cy="264.98" rx="1.75" ry="1.03" fill="#4a2a18"/><ellipse cx="523.49" cy="262.29" rx="0.40" ry="0.40" fill="#2a160c"/><ellipse cx="527.30" cy="262.29" rx="0.40" ry="0.40" fill="#2a160c"/><ellipse cx="525.40" cy="263.87" rx="0.56" ry="0.32" fill="#1e120a"/></svg></div>
  <div class="cap" style="left:416px;top:302px;text-align:left">Контрольный список дл...</div>

  <div id="hr"></div>

  <!-- highlighted section -->
  <div id="hl"></div>
  <div id="tabOffice">Office</div>
  <div id="tabPers"><span>Личные</span></div>
  <div id="tabLine"></div>

  <div class="thumb" style="left:204px;top:408px;width:150px;height:192px"><svg width="150" height="192" style="position:absolute;left:0;top:0"><rect x="13" y="12.30" width="121" height="1.4" fill="#b5b5b5"/><rect x="13" y="26.05" width="121" height="0.9" fill="#d8d8d8"/><rect x="13" y="30.95" width="121" height="0.9" fill="#d8d8d8"/><rect x="13" y="35.55" width="121" height="0.9" fill="#d8d8d8"/><rect x="13" y="40.15" width="81" height="0.9" fill="#d8d8d8"/><rect x="13" y="51.15" width="121" height="0.9" fill="#d8d8d8"/><rect x="13" y="56.05" width="121" height="0.9" fill="#d8d8d8"/><rect x="13" y="60.65" width="121" height="0.9" fill="#d8d8d8"/><rect x="13" y="65.25" width="121" height="0.9" fill="#d8d8d8"/><rect x="13" y="71.05" width="121" height="0.9" fill="#d8d8d8"/><rect x="13" y="75.95" width="121" height="0.9" fill="#d8d8d8"/><rect x="13" y="80.85" width="121" height="0.9" fill="#d8d8d8"/><rect x="13" y="85.75" width="121" height="0.9" fill="#d8d8d8"/><rect x="13" y="90.35" width="39.5" height="0.9" fill="#d8d8d8"/><rect x="13" y="100.85" width="121" height="0.9" fill="#d8d8d8"/><rect x="13" y="106.05" width="121" height="0.9" fill="#d8d8d8"/><rect x="13" y="110.65" width="121" height="0.9" fill="#d8d8d8"/><rect x="13" y="115.55" width="121" height="0.9" fill="#d8d8d8"/><rect x="13" y="121.35" width="121" height="0.9" fill="#d8d8d8"/><rect x="13" y="125.95" width="121" height="0.9" fill="#d8d8d8"/><rect x="13" y="132.05" width="39.5" height="0.9" fill="#d8d8d8"/><rect x="13" y="142.15" width="121" height="0.9" fill="#d8d8d8"/><rect x="13" y="147.35" width="121" height="0.9" fill="#d8d8d8"/><rect x="13" y="152.25" width="121" height="0.9" fill="#d8d8d8"/><rect x="13" y="157.15" width="121" height="0.9" fill="#d8d8d8"/><rect x="13" y="162.65" width="121" height="0.9" fill="#d8d8d8"/><rect x="13" y="167.25" width="121" height="0.9" fill="#d8d8d8"/><rect x="13" y="172.45" width="60.5" height="0.9" fill="#d8d8d8"/></svg></div>
  <div class="cap" style="left:201.500px;top:610px;width:150px">Название организации</div>

  <!-- scrollbar -->
  <div class="sbtn" style="top:106px"><svg class="ico" style="left:2px;top:3px" width="8" height="5" viewBox="0 0 8 5"><path d="M0.300 4.600L4 0.600l3.700 4z" fill="#555"/></svg></div>
  <div id="strack"></div>
  <div id="sthumb"></div>
  <div class="sbtn" style="top:668px;height:14.500px"><svg class="ico" style="left:2px;top:5px" width="8" height="5" viewBox="0 0 8 5"><path d="M0.300 0.400L4 4.400l3.700-4z" fill="#555"/></svg></div>
</div>
<div id="frame"></div>
</body>
</html>
